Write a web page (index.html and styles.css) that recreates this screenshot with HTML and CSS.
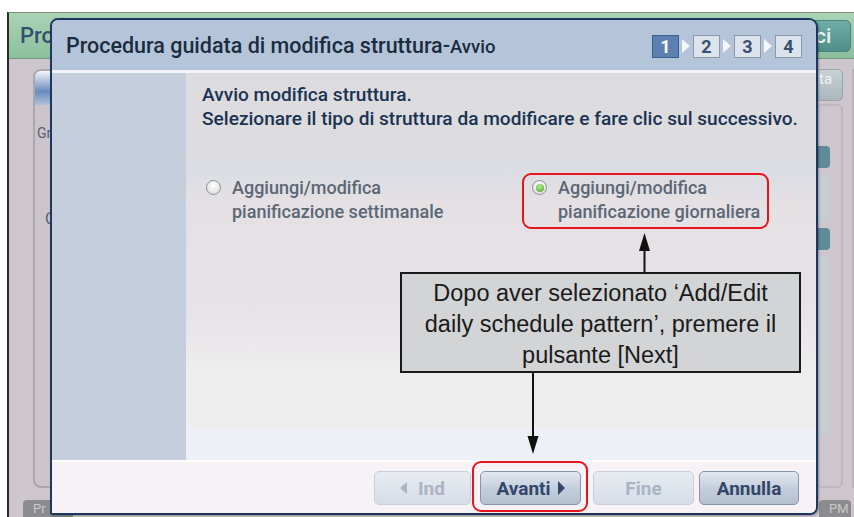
FILE: index.html
```html
<!DOCTYPE html>
<html lang="it">

<head>
  <meta charset="UTF-8">
  <meta name="viewport" content="width=device-width, initial-scale=1.0">
  <title>Procedura guidata di modifica struttura</title>
  <link rel="stylesheet" href="styles.css">
</head>

<body>

  <div class="screen">

    <!-- background application window -->
    <div class="app">
      <div class="app-head">
        <span class="app-title">Pro</span>
        <span class="app-btn">ci</span>
      </div>
      <div class="app-body">
        <div class="app-panel">
          <div class="app-tab"></div>
          <span class="app-label">Gr</span>
          <span class="app-label app-label-c">C</span>
        </div>
        <div class="app-side">
          <div class="side-btn">ta</div>
          <div class="side-box">
            <div class="side-teal"></div>
            <div class="side-light"></div>
            <div class="side-teal"></div>
            <div class="side-light tall"></div>
          </div>
        </div>
      </div>
      <div class="app-foot">
        <span class="foot-tab">Pr</span>
        <span class="foot-tab foot-pm">PM</span>
      </div>
    </div>

    <!-- wizard dialog -->
    <div class="dialog">
      <div class="dlg-head">
        <h1 class="dlg-title">Procedura guidata di modifica struttura-<small>Avvio</small></h1>
        <div class="steps">
          <span class="step active">1</span>
          <span class="step-arrow"></span>
          <span class="step">2</span>
          <span class="step-arrow"></span>
          <span class="step">3</span>
          <span class="step-arrow"></span>
          <span class="step">4</span>
        </div>
      </div>

      <div class="dlg-body">
        <div class="dlg-side"></div>
        <div class="dlg-content">
          <p class="intro">Avvio modifica struttura.<br>Selezionare il tipo di struttura da modificare e fare clic sul successivo.</p>
          <div class="options">
            <label class="option">
              <span class="radio"></span>
              <span>Aggiungi/modifica<br>pianificazione settimanale</span>
            </label>
            <label class="option">
              <span class="radio checked"></span>
              <span>Aggiungi/modifica<br>pianificazione giornaliera</span>
            </label>
          </div>
        </div>
      </div>

      <div class="dlg-foot">
        <button class="btn btn-prev" disabled><span class="tri-left"></span>Ind</button>
        <button class="btn btn-next">Avanti<span class="tri-right"></span></button>
        <button class="btn btn-finish" disabled>Fine</button>
        <button class="btn btn-cancel">Annulla</button>
      </div>
    </div>

    <!-- annotations -->
    <div class="mark mark-option"></div>
    <div class="mark mark-next"></div>

    <div class="callout">Dopo aver selezionato ‘Add/Edit<br>daily schedule pattern’, premere il<br>pulsante [Next]</div>

    <svg class="arrows" width="854" height="517" viewBox="0 0 854 517">
      <line x1="644.5" y1="248" x2="644.5" y2="273" stroke="#111" stroke-width="2" />
      <polygon points="644.5,233 639,251 650,251" fill="#111" />
      <line x1="533" y1="373" x2="533" y2="440" stroke="#111" stroke-width="2" />
      <polygon points="533,454 527.5,436 538.5,436" fill="#111" />
    </svg>

  </div>

</body>

</html>
```

FILE: styles.css
```css
body {
  margin: 0;
  padding: 0;
  background-color: #ffffff;
  font-family: Roboto, "Liberation Sans", sans-serif;
}

.screen {
  position: relative;
  width: 854px;
  height: 517px;
  overflow: hidden;
}

/* background app */

.app {
  margin: 12px 0 0 7px;
  height: 505px;
  border-left: 2px solid #2c2c30;
  border-top: 1px solid #7a8a80;
  box-sizing: border-box;
  background-color: #cec6cd;
  display: flex;
  flex-direction: column;
}

.app-head {
  height: 45px;
  display: flex;
  align-items: center;
  justify-content: space-between;
  padding: 0 3px 0 11px;
  background: linear-gradient(#a9d3b5, #8dbf9d);
  border-bottom: 1px solid #6f9a80;
}

.app-title {
  font-size: 22px;
  font-weight: 500;
  color: #34506e;
}

.app-btn {
  width: 41px;
  height: 32px;
  box-sizing: border-box;
  padding-left: 4px;
  border: 1px solid #4d837e;
  border-radius: 5px;
  background: linear-gradient(#6eaea6, #4f8f89);
  color: #e6f1f0;
  font-size: 21px;
  font-weight: 500;
  line-height: 30px;
}

.app-body {
  flex: 1;
  display: flex;
  padding: 10px 0 12px 24px;
}

.app-panel {
  flex: 1;
  border: 2px solid #aca6ad;
  border-radius: 8px;
  background-color: #cbc4cb;
}

.app-tab {
  width: 30px;
  height: 34px;
  border-radius: 6px 0 0 0;
  background: linear-gradient(#f4f6fa, #6a8cbd 60%, #b0c0d8);
}

.app-label {
  display: block;
  margin: 20px 0 0 2px;
  font-size: 14px;
  color: #556070;
}

.app-label-c {
  margin: 68px 0 0 10px;
  font-size: 16px;
}

.app-side {
  width: 27px;
  margin-left: 6px;
  padding-right: 9px;
  border-right: 2px solid #b9b3ba;
  display: flex;
  flex-direction: column;
  gap: 3px;
}

.side-btn {
  height: 30px;
  border: 1px solid #9aa6ab;
  border-radius: 5px;
  background: linear-gradient(#c7d2d6, #aab7bc);
  color: #eef2f3;
  font-size: 15px;
  padding-left: 2px;
}

.side-box {
  flex: 1;
  border: 2px solid #bdb7be;
  border-radius: 6px;
  padding: 40px 0 0 0;
  display: flex;
  flex-direction: column;
  gap: 6px;
}

.side-teal {
  width: 12px;
  height: 22px;
  border-radius: 0 4px 4px 0;
  background-color: #5f8a98;
}

.side-light {
  width: 12px;
  height: 48px;
  border-radius: 0 4px 4px 0;
  background-color: #c5cdd2;
}

.side-light.tall {
  height: 180px;
}

.app-foot {
  height: 17px;
  display: flex;
  justify-content: space-between;
  padding: 0 3px 0 14px;
}

.foot-tab {
  width: 40px;
  border-radius: 4px 4px 0 0;
  background-color: #8c8c8e;
  color: #c9c9cb;
  font-size: 13px;
  padding-left: 10px;
  line-height: 18px;
}

.foot-pm {
  width: 22px;
}

/* dialog */

.dialog {
  position: absolute;
  left: 50px;
  top: 18px;
  width: 768px;
  height: 497px;
  box-sizing: border-box;
  border: 2px solid #1d3760;
  border-radius: 8px 9px 8px 2px;
  overflow: hidden;
  display: flex;
  flex-direction: column;
  box-shadow: 1px 1px 2px rgba(0, 0, 0, 0.3);
}

.dlg-head {
  height: 50px;
  flex-shrink: 0;
  display: flex;
  align-items: center;
  justify-content: space-between;
  padding: 0 14px 0 14px;
  background-color: #b5c5d9;
  border-bottom: 3px solid #f2f3f8;
}

.dlg-title {
  margin: 0;
  font-size: 21.5px;
  font-weight: 500;
  color: #1c2c40;
}

.dlg-title small {
  font-size: 18.5px;
}

.steps {
  display: flex;
  align-items: center;
  margin-top: 2px;
}

.step {
  width: 27px;
  height: 23px;
  box-sizing: border-box;
  border: 1px solid #8d97a5;
  background-color: #dbe3ed;
  color: #3b4f6e;
  font-size: 18px;
  font-weight: 700;
  text-align: center;
  line-height: 21px;
}

.step.active {
  background-color: #5b80b1;
  border-color: #3c5e8c;
  color: #ffffff;
}

.step-arrow {
  width: 0;
  height: 0;
  margin: 0 3px 0 3px;
  border-top: 7px solid transparent;
  border-bottom: 7px solid transparent;
  border-left: 8px solid #f4f6fa;
}

.dlg-body {
  flex: 1;
  display: flex;
  border-bottom: 2px solid #ffffff;
}

.dlg-side {
  width: 134px;
  background-color: #c5cedd;
}

.dlg-content {
  flex: 1;
  padding: 10px 0 0 16px;
  background: linear-gradient(#dcdbde 0%, #dddcdf 20%, #d9dde2 24%, #e4e0e4 33%, #e6e2e6 60%, #eeeeee 78%, #eeeeee 92%, #edf0f6 92%);
}

.intro {
  margin: 0;
  font-size: 19.1px;
  line-height: 24px;
  font-weight: 500;
  color: #1b3352;
}

.options {
  display: flex;
  margin-top: 45px;
}

.option {
  display: flex;
  align-items: flex-start;
  gap: 11px;
  font-size: 18px;
  line-height: 24px;
  font-weight: 500;
  color: #5c6774;
}

.option:first-child {
  width: 326px;
  margin-left: 4px;
}

.radio {
  width: 15px;
  height: 15px;
  margin-top: 4px;
  box-sizing: border-box;
  border: 1px solid #8c8f95;
  border-radius: 50%;
  background: radial-gradient(circle at 50% 35%, #ffffff, #d6d6d9);
  position: relative;
}

.radio.checked::after {
  content: "";
  position: absolute;
  left: 2.5px;
  top: 2.5px;
  width: 8px;
  height: 8px;
  border-radius: 50%;
  background: radial-gradient(circle at 45% 35%, #b6ec8a, #4aa12d);
}

.dlg-foot {
  height: 51px;
  display: flex;
  align-items: flex-start;
  justify-content: flex-end;
  padding: 9px 17px 0 0;
  box-sizing: border-box;
  background-color: #f6f2f6;
}

.btn {
  height: 34px;
  width: 100px;
  border: 1px solid #8795aa;
  border-radius: 5px;
  background: linear-gradient(#e3e8f0, #c2cddb 55%, #b4c0d1);
  font-family: Roboto, "Liberation Sans", sans-serif;
  font-size: 19px;
  font-weight: 700;
  color: #33476a;
  display: flex;
  align-items: center;
  justify-content: center;
  gap: 7px;
  padding: 0;
}

.btn:disabled {
  border-color: #c6cfda;
  background: linear-gradient(#e8ecf2, #d6dde7);
  color: #aab4c3;
}

.btn-prev {
  width: 97px;
  gap: 11px;
}

.btn-next {
  width: 101px;
  margin-left: 9px;
}

.btn-finish {
  width: 101px;
  margin-left: 12px;
}

.btn-cancel {
  margin-left: 5px;
}

.tri-left {
  width: 0;
  height: 0;
  border-top: 6px solid transparent;
  border-bottom: 6px solid transparent;
  border-right: 7px solid #aab4c3;
}

.tri-right {
  width: 0;
  height: 0;
  border-top: 7px solid transparent;
  border-bottom: 7px solid transparent;
  border-left: 7px solid #33476a;
}

/* annotations */

.mark {
  position: absolute;
  box-sizing: border-box;
  border: 2px solid #e8141c;
  border-radius: 9px;
}

.mark-option {
  left: 522px;
  top: 173px;
  width: 247px;
  height: 56px;
}

.mark-next {
  left: 472px;
  top: 461px;
  width: 116px;
  height: 51px;
}

.callout {
  position: absolute;
  left: 400px;
  top: 272px;
  width: 401px;
  height: 101px;
  box-sizing: border-box;
  padding: 4px 0 0 0;
  border: 2px solid #1a1a1a;
  background-color: #d3d4d6;
  font-family: "Liberation Sans", Arial, sans-serif;
  font-size: 23.5px;
  line-height: 31px;
  color: #1a1a1a;
  text-align: center;
  white-space: nowrap;
}

.arrows {
  position: absolute;
  left: 0;
  top: 0;
}
```
